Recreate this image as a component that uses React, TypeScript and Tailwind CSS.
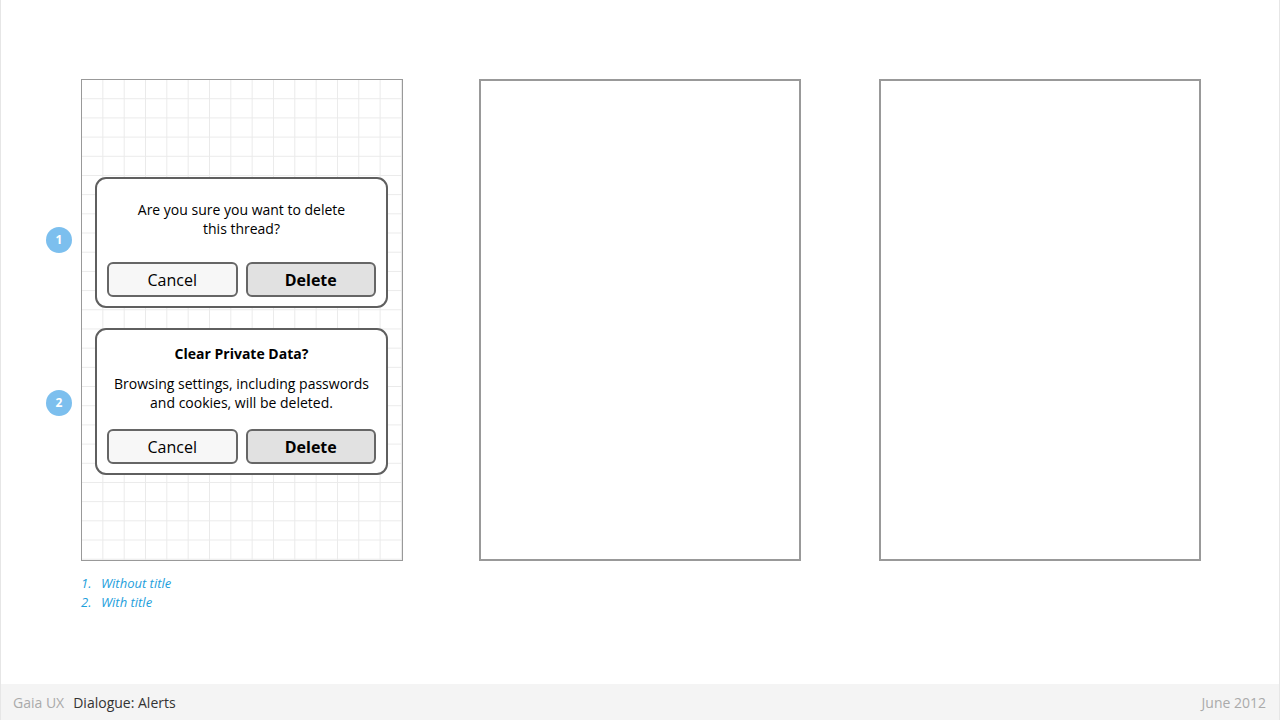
import React from "react";

const font = { fontFamily: '"Open Sans", "Liberation Sans", sans-serif' };

function Badge({ n, top }: { n: number; top: string }) {
  return (
    <div
      className={`absolute left-[-51px] ${top} flex h-[26px] w-[26px] items-center justify-center rounded-full bg-[#7cbfee] text-[12px] font-bold leading-none text-white`}
    >
      {n}
    </div>
  );
}

function Buttons() {
  return (
    <div className="flex gap-[8px] px-[10px]">
      <div className="flex h-[35px] flex-1 items-center justify-center rounded-[6px] border-2 border-[#666666] bg-[#f7f7f7] text-[16px] font-medium text-black">
        Cancel
      </div>
      <div className="flex h-[35px] flex-1 items-center justify-center rounded-[6px] border-2 border-[#666666] bg-[#e1e1e1] text-[16px] font-bold text-black">
        Delete
      </div>
    </div>
  );
}

export default function App() {
  return (
    <div className="flex h-[720px] w-[1280px] flex-col border-x border-[#e6e6e6] bg-white" style={font}>
      <div className="flex h-[684px] flex-col pl-[80px] pt-[79px]">
        <div className="flex">
          {/* phone screen with layout grid */}
          <div className="flex h-[482px] w-[322px] flex-col border border-[#999999] bg-white bg-[linear-gradient(to_left,#eaeaea_1px,transparent_1px),linear-gradient(to_top,#eaeaea_1px,transparent_1px)] bg-[size:21.333px_19.2px]">
            <div className="relative ml-[13px] mt-[97px] w-[293px] rounded-[11px] border-2 border-[#5f5f5f] bg-white pb-[9px] pt-[21px]">
              <Badge n={1} top="top-[48px]" />
              <p className="text-center text-[14px] leading-[19px] text-black">
                Are you sure you want to delete
                <br />
                this thread?
              </p>
              <div className="mt-[24px]">
                <Buttons />
              </div>
            </div>
            <div className="relative ml-[13px] mt-[20px] w-[293px] rounded-[11px] border-2 border-[#5f5f5f] bg-white pb-[9px] pt-[14px]">
              <Badge n={2} top="top-[60px]" />
              <p className="text-center text-[14px] font-bold leading-[19px] text-black">Clear Private Data?</p>
              <p className="mt-[11px] text-center text-[14px] leading-[19px] text-black">
                Browsing settings, including passwords
                <br />
                and cookies, will be deleted.
              </p>
              <div className="mt-[17px]">
                <Buttons />
              </div>
            </div>
          </div>
          <div className="ml-[76px] h-[482px] w-[322px] border-2 border-[#999999]" />
          <div className="ml-[78px] h-[482px] w-[322px] border-2 border-[#999999]" />
        </div>
        <ol className="mt-[13px] text-[13px] italic leading-[19px] text-[#1ea0dc]">
          <li className="flex">
            <span className="w-[20px]">1.</span>
            <span>Without title</span>
          </li>
          <li className="flex">
            <span className="w-[20px]">2.</span>
            <span>With title</span>
          </li>
        </ol>
      </div>
      <div className="flex h-[36px] items-center bg-[#f4f4f4] pl-[12px] pr-[13px] text-[14px]">
        <span className="text-[#aaaaaa]">Gaia UX</span>
        <span className="ml-[9px] text-[#333333]">Dialogue: Alerts</span>
        <span className="ml-auto text-[#aaaaaa]">June 2012</span>
      </div>
    </div>
  );
}
